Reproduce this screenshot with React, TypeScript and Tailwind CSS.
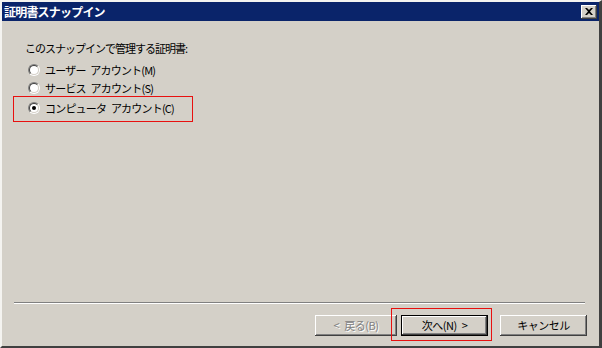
import React from 'react';

const font = { fontFamily: '"Noto Sans CJK JP", "Liberation Sans", sans-serif' };

function Radio({ checked }: { checked?: boolean }) {
  return (
    <div className="w-[12px] h-[12px] rounded-full border border-t-[#808080] border-l-[#808080] border-b-white border-r-white shrink-0">
      <div className="w-full h-full rounded-full border border-t-[#404040] border-l-[#404040] border-b-[#d4d0c8] border-r-[#d4d0c8] bg-white flex items-center justify-center">
        {checked && <div className="w-[4px] h-[4px] rounded-full bg-black" />}
      </div>
    </div>
  );
}

function RadioRow({ label, checked }: { label: string; checked?: boolean }) {
  return (
    <div className="flex items-center gap-[5px] h-[18px]">
      <Radio checked={checked} />
      <span className="text-[11px] leading-[14px] tracking-[-0.8px] text-black whitespace-pre">{label}</span>
    </div>
  );
}

const raised =
  'shadow-[inset_-1px_-1px_#404040,inset_1px_1px_#ffffff,inset_-2px_-2px_#808080,inset_2px_2px_#d4d0c8]';

export default function App() {
  return (
    <div
      className="w-[602px] h-[348px] overflow-hidden bg-[#d4d0c8] flex flex-col border-t-2 border-l-2 border-r-[3px] border-b-2 border-t-[#f4f3f0] border-l-[#f4f3f0] border-r-[#404040] border-b-[#404040]"
      style={font}
    >
      {/* title bar */}
      <div className="h-[19px] bg-[#0a246a] flex items-center justify-between pl-[2px] pr-[2px] shrink-0">
        <span className="text-white font-bold text-[12px] leading-[19px] tracking-[-0.8px]">証明書スナップイン</span>
        <div className={`w-[16px] h-[14px] bg-[#d4d0c8] flex items-center justify-center ${raised}`}>
          <svg width="8" height="7" viewBox="0 0 8 7">
            <path d="M0 0h2l2 2 2-2h2L5 3.5 8 7H6L4 5 2 7H0l3-3.5z" fill="#000" />
          </svg>
        </div>
      </div>

      {/* body */}
      <div className="flex-1 flex flex-col pl-[11px] pr-[10px]">
        <div className="mt-[20px] ml-[12px] text-[11px] leading-[14px] tracking-[-1px] text-black">
          このスナップインで管理する証明書:
        </div>
        <div className="mt-[6px] ml-[15px]">
          <RadioRow label={'ユーザー\u2002アカウント(M)'} />
        </div>
        <div className="ml-[15px] -mb-px">
          <RadioRow label={'サービス\u2002アカウント(S)'} />
        </div>
        <div className="w-[180px] h-[26px] border border-[#e8100f] pl-[14px] pt-[2px]">
          <RadioRow label={'コンピュータ\u2002アカウント(C)'} checked />
        </div>

        <div className="flex-1" />

        <div className="ml-[1px] mr-[4px] h-[2px] border-t border-t-[#808080] border-b border-b-white" />

        <div className="mt-[11px] mb-[10px] mr-[2px] flex justify-end items-center h-[21px]">
          <div className={`w-[82px] h-[21px] flex items-center justify-center ${raised}`}>
            <span className="text-[11px] tracking-[-0.5px] text-[#808080] whitespace-pre [text-shadow:1px_1px_0_#ffffff]">
              {'<\u2002戻る(B)'}
            </span>
          </div>
          <div className="relative ml-[4px]">
            <div className={`w-[87px] h-[21px] flex items-center justify-center border border-black ${raised}`}>
              <span className="text-[11px] tracking-[-0.5px] text-black whitespace-pre">{'次へ(N)\u2002>'}</span>
            </div>
            <div className="absolute -left-[10px] -top-[7px] -right-[4px] -bottom-[5px] border border-[#e8100f] pointer-events-none" />
          </div>
          <div className={`ml-[12px] w-[87px] h-[21px] flex items-center justify-center ${raised}`}>
            <span className="text-[11px] tracking-[-0.5px] text-black">キャンセル</span>
          </div>
        </div>
      </div>
    </div>
  );
}
